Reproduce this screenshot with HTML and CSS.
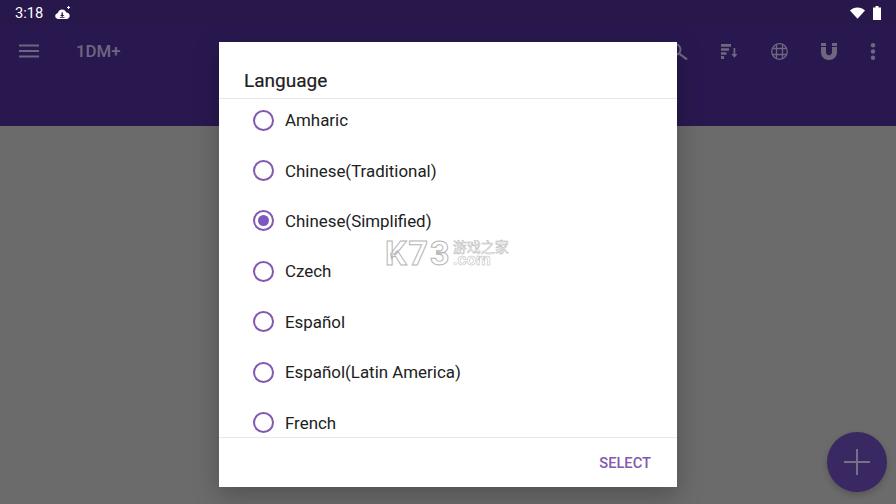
FILE: index.html
```html
<!DOCTYPE html>
<html lang="en">
<head>
  <meta charset="UTF-8">
  <meta name="viewport" content="width=device-width, initial-scale=1.0">
  <title>1DM+ Language</title>
  <link rel="stylesheet" href="styles.css">
</head>
<body>
  <div class="app">
    <header class="app-header">
      <div class="status-bar">
        <div class="status-left">
          <span class="clock">3:18</span>
          <svg class="cloud-icon" width="16" height="14" viewBox="0 0 16 14">
            <path fill="#fff" d="M3.400 13C1.500 13 .2 11.700.2 10.100c0-1.500 1-2.700 2.500-2.900C3.300 5.100 5 3.600 7.100 3.600c1.900 0 3.500 1.100 4.200 2.900 2 .1 3.400 1.600 3.400 3.300 0 1.800-1.400 3.200-3.200 3.200z"/>
            <path fill="#27174a" d="M6.500 6.500h1.400v2.400h1.500L7.200 11 5 8.900h1.500zM4.800 11.200h4.800v.8H4.800z"/>
            <path stroke="#fff" stroke-width="1" d="M13.500 0v3M12 1.500h3"/>
          </svg>
        </div>
        <div class="status-right">
          <svg width="15" height="12" viewBox="0 0 15 12"><path fill="#fff" d="M0 3.400C2 1.500 4.600.4 7.500.4s5.500 1.100 7.500 3L7.500 11.800z"/></svg>
          <svg width="8" height="14" viewBox="0 0 8 14"><path fill="#fff" d="M2.500 0h3v1.500H8V14H0V1.500h2.500z"/></svg>
        </div>
      </div>
      <div class="toolbar">
        <svg class="menu-icon" width="20" height="14" viewBox="0 0 20 14"><path stroke="#6f6780" stroke-width="2" d="M0 1.500h20M0 7h20M0 12.500h20"/></svg>
        <span class="app-name">1DM+</span>
        <div class="toolbar-actions">
          <svg width="20" height="17" viewBox="0 0 20 17"><circle cx="7" cy="6.500" r="5.500" fill="none" stroke="#6f6780" stroke-width="2"/><path stroke="#6f6780" stroke-width="2.200" d="M11 10.500l8 6"/></svg>
          <svg width="17" height="15" viewBox="0 0 17 15"><path fill="#6f6780" d="M0 0h10v2.800H0zM0 4.200h8v2.500H0zM0 8.200h5.500v2.500H0zM0 12h3v3H0zM12.500 4h1.800v6h2.200l-3.100 3.800L10.300 10h2.200z"/></svg>
          <svg width="17" height="17" viewBox="0 0 17 17"><g fill="none" stroke="#6f6780" stroke-width="1.300"><circle cx="8.500" cy="8.500" r="7.800"/><path d="M5.500 5.500h6v6h-6zM5.500 1.500v14M11.500 1.500v14M1.500 5.500h14M1.500 11.500h14"/></g></svg>
          <svg width="16" height="17" viewBox="0 0 16 17"><path fill="#6f6780" d="M0 0h5v9c0 1.900 1.300 3.200 3 3.200s3-1.300 3-3.200V0h5v9c0 4.800-3.400 8-8 8S0 13.800 0 9z"/><path stroke="#29184f" d="M0 3.500h5M11 3.500h5"/></svg>
          <svg width="6" height="17" viewBox="0 0 6 17"><g fill="#6f6780"><circle cx="3" cy="2.300" r="2.200"/><circle cx="3" cy="8.500" r="2.200"/><circle cx="3" cy="14.700" r="2.200"/></g></svg>
        </div>
      </div>
    </header>
    <main class="app-body">
      <button class="fab" type="button">
        <svg width="26" height="26" viewBox="0 0 26 26"><path stroke="#77708a" stroke-width="2" d="M13 0v26M0 13h26"/></svg>
      </button>
    </main>
  </div>

  <div class="dialog">
    <h2 class="dialog-title">Language</h2>
    <div class="language-list">
      <div class="language-rows">
        <label class="language-row"><span class="radio"></span>Amharic</label>
        <label class="language-row"><span class="radio"></span>Chinese(Traditional)</label>
        <label class="language-row"><span class="radio checked"></span>Chinese(Simplified)</label>
        <label class="language-row"><span class="radio"></span>Czech</label>
        <label class="language-row"><span class="radio"></span>Español</label>
        <label class="language-row"><span class="radio"></span>Español(Latin America)</label>
        <label class="language-row"><span class="radio"></span>French</label>
      </div>
    </div>
    <div class="dialog-footer">
      <button class="select-btn" type="button">SELECT</button>
    </div>
  </div>

  <div class="watermark">
    <span class="wm-logo">K73</span>
    <div class="wm-side">
      <span class="wm-cn">游戏之家</span>
      <span class="wm-com">.com</span>
    </div>
  </div>
</body>
</html>
```

FILE: styles.css
```css
html, body {
  height: 100%;
}
body {
  margin: 0;
  font-family: Roboto, "Liberation Sans", sans-serif;
  overflow: hidden;
  background: #6b6b6b;
}
.app {
  display: flex;
  flex-direction: column;
  height: 504px;
}
.app-header {
  height: 126px;
  background: #29184f;
}
.status-bar {
  height: 26px;
  padding: 0 15px;
  display: flex;
  justify-content: space-between;
  align-items: center;
  background: #27174a;
}
.status-left, .status-right {
  display: flex;
  align-items: center;
}
.status-left {
  gap: 12px;
}
.status-right {
  gap: 8px;
}
.clock {
  color: #fff;
  font-size: 14.700px;
}
.toolbar {
  display: flex;
  align-items: center;
  height: 50px;
  padding-left: 19px;
}
.app-name {
  margin-left: 37px;
  color: #6f6780;
  font-size: 16.800px;
  font-weight: 500;
}
.toolbar-actions {
  display: flex;
  align-items: center;
  gap: 33px;
  margin-left: auto;
  padding-right: 20px;
}
.app-body {
  flex: 1;
  display: flex;
  justify-content: flex-end;
  align-items: flex-end;
  padding: 0 9px 12px 0;
}
.fab {
  width: 60px;
  height: 60px;
  padding: 0;
  border: none;
  border-radius: 50%;
  background: #3a2862;
  display: flex;
  justify-content: center;
  align-items: center;
  box-shadow: 0 3px 6px rgba(0, 0, 0, 0.2);
}
.dialog {
  position: absolute;
  left: 219px;
  top: 42px;
  width: 458px;
  height: 445px;
  background: #fff;
  display: flex;
  flex-direction: column;
  box-shadow: 0 8px 24px rgba(0, 0, 0, 0.25);
}
.dialog-title {
  margin: 0;
  height: 57px;
  padding: 28px 25px 0;
  box-sizing: border-box;
  border-bottom: 1px solid #e8e8e8;
  color: #212121;
  font-size: 19px;
  font-weight: 400;
  line-height: 22px;
  -webkit-text-stroke: 0.200px #212121;
}
.language-list {
  flex: 1;
  overflow: hidden;
}
.language-rows {
  margin-top: -4px;
}
.language-row {
  display: flex;
  align-items: center;
  height: 50.400px;
  padding-left: 34px;
  color: #212121;
  font-size: 16.900px;
}
.radio {
  width: 21px;
  height: 21px;
  margin-right: 11px;
  box-sizing: border-box;
  border: 2px solid #8259ae;
  border-radius: 50%;
  display: flex;
  justify-content: center;
  align-items: center;
}
.radio.checked::after {
  content: "";
  width: 11px;
  height: 11px;
  border-radius: 50%;
  background: #7e57c2;
}
.dialog-footer {
  height: 50px;
  box-sizing: border-box;
  border-top: 1px solid #e8e8e8;
  display: flex;
  justify-content: flex-end;
  align-items: center;
  padding-right: 26px;
}
.select-btn {
  padding: 0;
  border: none;
  background: none;
  color: #8259ae;
  font-family: inherit;
  font-size: 14.700px;
  font-weight: 500;
}
.watermark {
  position: absolute;
  left: 385px;
  top: 236px;
  display: flex;
  align-items: center;
  gap: 1px;
  color: #fff;
}
.wm-logo {
  font-size: 34px;
  font-weight: 700;
  letter-spacing: 2px;
  line-height: 34px;
  -webkit-text-stroke: 1px #b5b5b5;
}
.wm-side {
  display: flex;
  flex-direction: column;
  align-items: flex-start;
  line-height: 13px;
}
.wm-cn {
  font-family: "Noto Sans CJK SC", sans-serif;
  font-size: 14px;
  -webkit-text-stroke: 0.500px #b5b5b5;
}
.wm-com {
  font-size: 17px;
  font-weight: 700;
  -webkit-text-stroke: 0.500px #b5b5b5;
}
```
